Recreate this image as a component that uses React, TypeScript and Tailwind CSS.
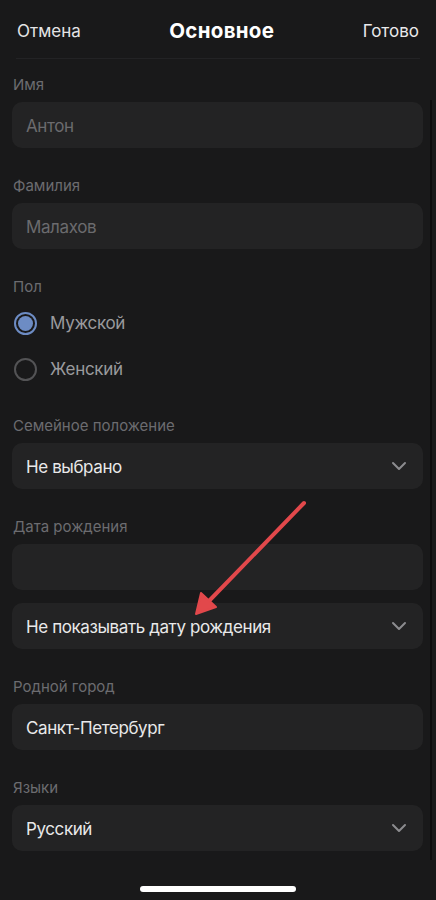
import React from "react";

type BoxProp = {
  value?: string;
  muted?: boolean;
  select?: boolean;
};

const Chevron = () => (
  <svg width="16" height="10" viewBox="0 0 16 10" fill="none" className="shrink-0">
    <path d="M2 2l6 6 6-6" stroke="#8c8c8f" strokeWidth={2} strokeLinecap="round" strokeLinejoin="round" />
  </svg>
);

const Box: React.FC<BoxProp> = ({ value, muted, select }) => (
  <div className="h-[46px] rounded-[10px] bg-[#232324] flex items-center justify-between pl-[14px] pr-[16px]">
    <span className={`text-[17px] tracking-[-0.4px] pt-[3px] ${muted ? "text-[#6b6b6e]" : "text-[#e9e9ea]"}`}>
      {value}
    </span>
    {select && <Chevron />}
  </div>
);

const Section = ({ label, children }: { label: string; children: React.ReactNode }) => (
  <div className="flex flex-col gap-[6px]">
    <div className="text-[15px] leading-[22px] text-[#6c6c70] pl-[1px]">{label}</div>
    {children}
  </div>
);

const Radio = ({ checked, text }: { checked?: boolean; text: string }) => (
  <div className="h-[24px] flex items-center gap-[13px] pl-[2px]">
    {checked ? (
      <div className="w-[23px] h-[23px] rounded-full border-[2px] border-[#6d8cc4] flex items-center justify-center">
        <div className="w-[15px] h-[15px] rounded-full bg-[#6d8cc4]" />
      </div>
    ) : (
      <div className="w-[23px] h-[23px] rounded-full border-[2px] border-[#535355]" />
    )}
    <span className="text-[17px] tracking-[-0.3px] text-[#9a9a9d] pt-[2px]">{text}</span>
  </div>
);

const App = () => {
  return (
    <div
      className="relative w-[436px] h-[900px] bg-[#19191a] overflow-hidden flex flex-col"
      style={{ fontFamily: "Inter, 'Noto Sans', sans-serif" }}
    >
      {/* header */}
      <div className="h-[58px] shrink-0 pt-[5px] px-[17px] flex items-center justify-between">
        <span className="text-[17px] text-[#e4e4e6]">Отмена</span>
        <span className="text-[20.5px] font-bold text-white tracking-[0.3px]">Основное</span>
        <span className="text-[17px] text-[#e9e9eb]">Готово</span>
      </div>
      <div className="h-px shrink-0 mx-4 bg-[#232325]" />

      <div className="flex flex-col gap-[27px] pt-[15px] pl-3 pr-[13px]">
        <Section label="Имя">
          <Box value="Антон" muted />
        </Section>

        <Section label="Фамилия">
          <Box value="Малахов" muted />
        </Section>

        <Section label="Пол">
          <div className="flex flex-col gap-[22px] py-[7px]">
            <Radio checked text="Мужской" />
            <Radio text="Женский" />
          </div>
        </Section>

        <Section label="Семейное положение">
          <Box value="Не выбрано" select />
        </Section>

        <Section label="Дата рождения">
          <div className="flex flex-col gap-[13px]">
            <Box value="" />
            <Box value="Не показывать дату рождения" select />
          </div>
        </Section>

        <Section label="Родной город">
          <Box value="Санкт-Петербург" />
        </Section>

        <Section label="Языки">
          <Box value="Русский" select />
        </Section>
      </div>

      {/* home indicator */}
      <div className="mt-auto pb-[8px] flex justify-center">
        <div className="w-[156px] h-[6px] rounded-full bg-white" />
      </div>

      {/* scroll edge */}
      <div className="absolute right-[4px] top-[100px] h-[760px] w-[2px] bg-[#0c0c0d]" />

      {/* annotation arrow */}
      <svg className="absolute left-0 top-0 pointer-events-none" width="436" height="900" viewBox="0 0 436 900">
        <path d="M304 503 L208 602" stroke="#e2484b" strokeWidth={4} strokeLinecap="round" />
        <path d="M196 614 L201 593 L216 607 Z" fill="#e2484b" stroke="#e2484b" strokeWidth={2} strokeLinejoin="round" />
      </svg>
    </div>
  );
};

export default App;
